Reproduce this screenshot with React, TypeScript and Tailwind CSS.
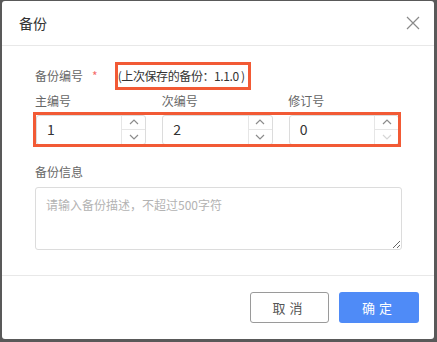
const font = { fontFamily: '"Noto Sans CJK SC", "Noto Sans", sans-serif' };

type NumberBoxProps = {
  value: string;
  canDown?: boolean;
};

const Chevron = ({ up, muted }: { up?: boolean; muted?: boolean }) => (
  <svg width="10" height="6" viewBox="0 0 10 6" fill="none">
    <path
      d={up ? "M1 5L5 1L9 5" : "M1 1L5 5L9 1"}
      stroke={muted ? "#d6d6d6" : "#8c8c8c"}
      strokeWidth="1.2"
    />
  </svg>
);

const NumberBox = ({ value, canDown = true }: NumberBoxProps) => (
  <div className="flex h-[30px] border border-[#dcdcdc] rounded-[3px] bg-white">
    <div className="flex-1 flex items-center pl-[10px] text-[14px] text-[#333]">
      {value}
    </div>
    <div className="w-[24px] flex flex-col border-l border-[#e6e6e6]">
      <div className="flex-1 flex items-center justify-center border-b border-[#e6e6e6]">
        <Chevron up />
      </div>
      <div className="flex-1 flex items-center justify-center">
        <Chevron muted={!canDown} />
      </div>
    </div>
  </div>
);

const App = () => {
  return (
    <div className="w-[437px] h-[342px] bg-[#595959] pl-[2px] pt-[1px]" style={font}>
      <div className="w-[432px] h-[338px] bg-white rounded-[3px] flex flex-col">
        <div className="h-[45px] shrink-0 border-b border-[#e8e8e8] flex items-center justify-between pl-[17px] pr-[14px]">
          <span className="text-[14px] text-[#333]">备份</span>
          <svg width="14" height="14" viewBox="0 0 14 14" fill="none">
            <path d="M1 1L13 13M13 1L1 13" stroke="#8a8a8a" strokeWidth="1.2" />
          </svg>
        </div>

        <div className="flex-1 pl-[33px] pr-[30px]">
          <div className="mt-[16px] h-[28px] flex items-center text-[12px]">
            <span className="text-[#666]">备份编号</span>
            <span className="text-[#f56c6c] ml-[9px]">*</span>
            <div className="ml-[17px] h-[28px] w-[136px] border-[3px] border-[#f25a35] flex items-center text-[12px] text-[#333] whitespace-nowrap tracking-[-0.4px]">
              (上次保存的备份：1.1.0 )
            </div>
          </div>

          <div className="grid grid-cols-3 gap-x-[16px] mt-[3px] text-[12px] text-[#666] w-[364px]">
            <span className="h-[16px] leading-[16px]">主编号</span>
            <span className="h-[16px] leading-[16px]">次编号</span>
            <span className="h-[16px] leading-[16px]">修订号</span>
          </div>

          <div className="relative mt-[3px] h-[35px] flex items-center">
            <div className="grid grid-cols-3 gap-x-[16px] w-[363px] ml-[1px]">
              <NumberBox value="1" />
              <NumberBox value="2" />
              <NumberBox value="0" canDown={false} />
            </div>
            <div className="absolute left-[-2px] top-0 w-[368px] h-[35px] border-[3px] border-[#f25a35]" />
          </div>

          <div className="mt-[17px] h-[16px] leading-[16px] text-[12px] text-[#666]">
            备份信息
          </div>
          <textarea
            className="mt-[7px] block w-[367px] h-[63px] border border-[#dcdcdc] rounded-[3px] px-[10px] py-[8px] text-[12px] text-[#333] placeholder:text-[#b3b3b3] outline-none"
            placeholder="请输入备份描述，不超过500字符"
            style={font}
          />
        </div>

        <div className="h-[64px] shrink-0 border-t border-[#e8e8e8] flex items-center justify-end gap-[10px] pr-[15px]">
          <button className="w-[79px] h-[31px] border border-[#9a9a9a] rounded-[3px] text-[13px] text-[#555] tracking-[4px] bg-white">
            取消
          </button>
          <button className="w-[80px] h-[31px] rounded-[3px] text-[13px] text-white tracking-[4px] bg-[#4f8bf7]">
            确定
          </button>
        </div>
      </div>
    </div>
  );
};

export default App;
